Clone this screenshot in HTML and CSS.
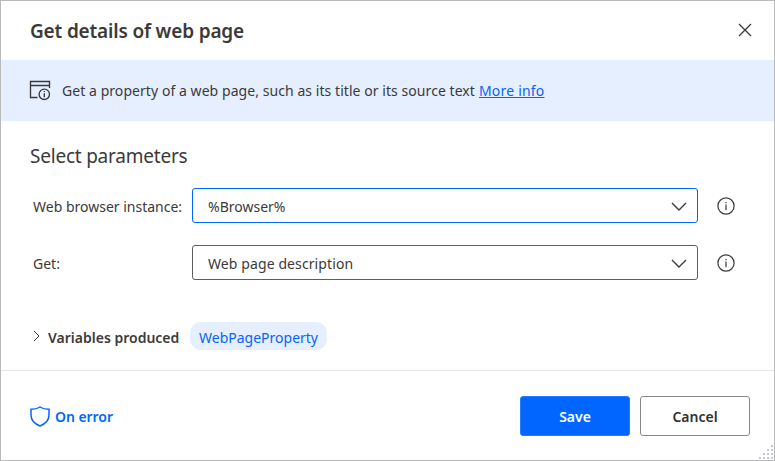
FILE: index.html
```html
<!DOCTYPE html>
<html lang="en">
<head>
<meta charset="utf-8">
<title>Get details of web page</title>
<link rel="stylesheet" href="styles.css">
</head>
<body>
<main class="dialog">
  <header class="header">
    <h1 class="title">Get details of web page</h1>
    <button class="close" aria-label="Close"><svg width="14" height="14" viewBox="0 0 14 14"><path d="M1 1l12 12M13 1L1 13"/></svg></button>
  </header>
  <section class="banner">
    <svg class="banner-icon" width="22" height="22" viewBox="0 0 22 22"><path d="M8.500 17.500H1.500V1.500H20.500V8M1.500 5.500H20.500"/><circle cx="15.300" cy="14.300" r="5.200"/><path d="M15.300 13.300v4M15.300 10.900v1.200"/></svg>
    <p class="desc">Get a property of a web page, such as its title or its source text<a class="more" href="#">More info</a></p>
  </section>
  <section class="body">
    <h2 class="subtitle">Select parameters</h2>
    <div class="row">
      <span class="label">Web browser instance:</span>
      <div class="select focused"><span>%Browser%</span><svg width="16" height="9" viewBox="0 0 16 9"><path d="M1 1l7 7 7-7"/></svg></div>
      <svg class="info" width="18" height="18" viewBox="0 0 18 18"><circle cx="9" cy="9" r="8.100"/><path d="M9 7.600v5.600M9 4.900v1.400"/></svg>
    </div>
    <div class="row">
      <span class="label">Get:</span>
      <div class="select"><span class="option">Web page description</span><svg width="16" height="9" viewBox="0 0 16 9"><path d="M1 1l7 7 7-7"/></svg></div>
      <svg class="info info-get" width="18" height="18" viewBox="0 0 18 18"><circle cx="9" cy="9" r="8.100"/><path d="M9 7.600v5.600M9 4.900v1.400"/></svg>
    </div>
    <div class="variables">
      <svg class="chev" width="7" height="12" viewBox="0 0 7 12"><path d="M1 1l5 5-5 5"/></svg>
      <span class="produced">Variables produced</span>
      <span class="pill">WebPageProperty</span>
    </div>
  </section>
  <footer class="footer">
    <a class="error"><svg width="20" height="21" viewBox="0 0 20 21"><path d="M10 1C7.500 2.700 4.800 3.300 1 3.300V9c0 5.300 3.600 8.800 9 11 5.400-2.200 9-5.700 9-11V3.300C15.200 3.300 12.500 2.700 10 1Z"/></svg><span class="error-text">On error</span></a>
    <button class="btn save">Save</button>
    <button class="btn cancel">Cancel</button>
  </footer>
  <svg class="grip" width="14" height="14" viewBox="0 0 14 14"><path d="M12 0h2v2h-2zM8 4h2v2h-2zM12 4h2v2h-2zM4 8h2v2h-2zM8 8h2v2h-2zM12 8h2v2h-2zM0 12h2v2h-2zM4 12h2v2h-2zM8 12h2v2h-2zM12 12h2v2h-2z"/></svg>
</main>
</body>
</html>
```
FILE: styles.css
```css
* { box-sizing: border-box; }
body { margin: 0; font: 14px/20px "Noto Sans", "Open Sans", sans-serif; color: #3b3a39; }
svg { fill: none; stroke: #3b3a39; flex: none; display: block; }
h1, h2, p { margin: 0; }
button { font: inherit; background: none; padding: 0; }
.dialog { position: relative; width: 775px; height: 461px; border: 1px solid #bababa; background: #fff; display: flex; flex-direction: column; }
.header { height: 59px; padding: 0 22px 0 29px; display: flex; align-items: center; justify-content: space-between; }
.title { font-size: 19px; font-weight: 600; line-height: 28px; letter-spacing: -0.17px; }
.close { border: 0; }
.close svg { stroke-width: 1.3; margin-top: -1px; }
.banner { height: 61px; background: #e5efff; padding-left: 28px; display: flex; align-items: center; }
.banner-icon { stroke-width: 1.35; margin-top: 1px; }
.desc { margin-left: 11px; white-space: nowrap; letter-spacing: 0.06px; }
.more { color: #0a63f5; margin-left: 4px; letter-spacing: 0.2px; }
.body { height: 249px; padding: 22px 0 0 29px; }
.subtitle { font-size: 19px; font-weight: 400; line-height: 26px; letter-spacing: -0.22px; }
.row { display: grid; grid-template-columns: 162px 506px 18px; column-gap: 0; height: 35px; margin-top: 22px; align-items: center; }
.subtitle + .row { margin-top: 19px; }
.label { padding: 2px 0 0 3px; white-space: nowrap; }
.select { height: 35px; border: 1px solid #605e5c; border-radius: 3px; display: flex; align-items: center; justify-content: space-between; padding: 2px 10px 0 15px; }
.select svg { stroke-width: 1.4; margin-top: -1px; }
.select.focused { border-color: #0066ff; }
.option { letter-spacing: 0.1px; }
.info { margin-left: 19px; stroke-width: 1.2; }
.info-get { margin-top: 1px; }
.variables { display: flex; align-items: center; height: 28px; margin-top: 42px; padding-left: 3px; }
.chev { margin-top: -1px; stroke-width: 1; }
.produced { font-weight: 600; margin-left: 8px; width: 131px; padding-top: 3px; white-space: nowrap; }
.pill { height: 28px; width: 137px; border-radius: 11px; background: #e5efff; color: #0a63f5; margin-left: 11px; padding-top: 3px; display: flex; align-items: center; justify-content: center; }
.footer { flex: 1; border-top: 1px solid #e5e5e5; display: flex; align-items: center; padding: 1px 24px 0 29px; }
.error { color: #0066ff; font-weight: 600; display: flex; align-items: center; gap: 5px; margin-right: auto; }
.error svg { stroke: #0066ff; stroke-width: 1.5; }
.error-text { padding-top: 2px; letter-spacing: -0.05px; }
.btn { width: 110px; height: 40px; border: 1px solid #8a8886; border-radius: 3px; font-weight: 600; color: #323130; margin-left: 10px; padding-top: 2px; }
.save { background: #0066ff; border-color: #247bff; color: #fff; }
.grip { position: absolute; right: 1px; bottom: 1px; fill: #bfc8da; stroke: none; }
```
